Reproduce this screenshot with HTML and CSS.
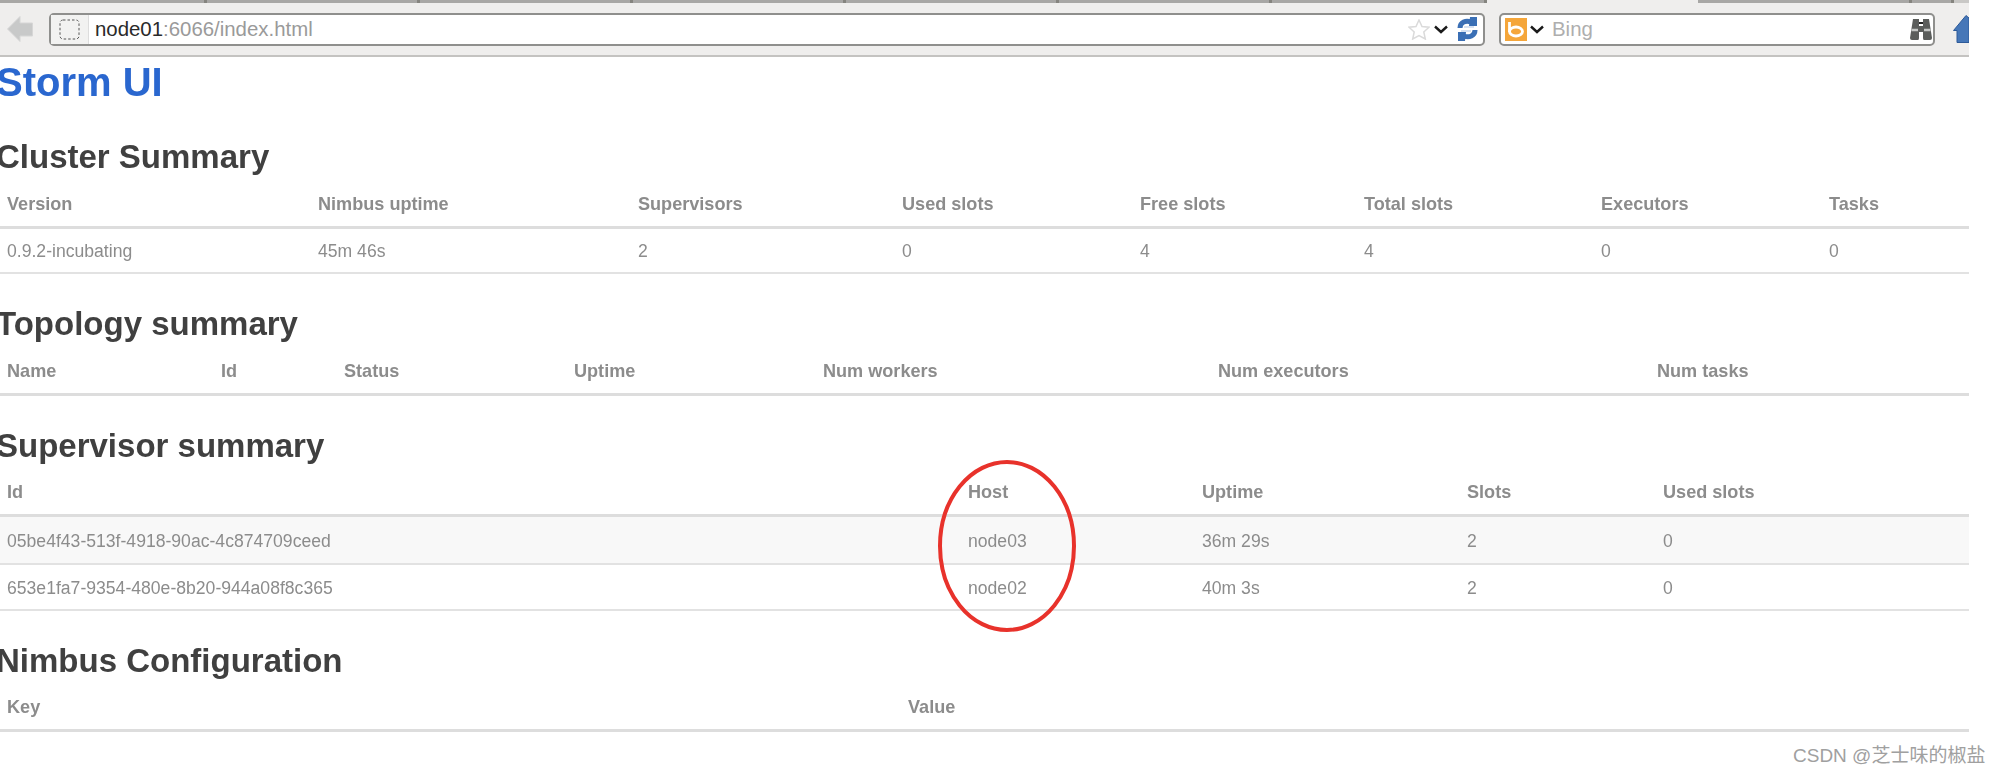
FILE: index.html
```html
<!DOCTYPE html>
<html lang="en">
<head>
<meta charset="utf-8">
<title>Storm UI</title>
<link rel="stylesheet" href="styles.css">
</head>
<body>
<div class="page">
  <div class="toolbar">
    <div class="tabs">
      <span class="tab t1"></span><span class="tab t2"></span><span class="tab t2"></span><span class="tab t2"></span><span class="tab t2"></span><span class="tab t2"></span><span class="tab t3"></span><span class="tabgap"></span><span class="tab t4"></span><span class="tab t5"></span><span class="tabrest"></span>
    </div>
    <div class="navrow">
      <svg class="back" width="26" height="26" viewBox="0 0 26 26"><path d="M0.500 13 L13 0.500 V7 H25.500 V20 H13 V25.500 Z" fill="#c8c9c9" stroke="#d6d6d6"/></svg>
      <div class="urlbar">
        <span class="identity"><svg width="21" height="21" viewBox="0 0 21 21"><rect x="1" y="1" width="19" height="19" rx="3" fill="none" stroke="#555" stroke-dasharray="2.500 2"/></svg></span>
        <span class="host">node01</span><span class="urlrest">:6066/index.html</span>
        <span class="grow"></span>
        <svg class="star" width="22" height="21" viewBox="0 0 22 21"><path d="M11 1 L14 7.500 L21 8.200 L15.800 13 L17.300 20 L11 16.500 L4.700 20 L6.200 13 L1 8.200 L8 7.500 Z" fill="#fff" stroke="#dadada" stroke-width="1.500"/></svg>
        <svg class="chev" width="14" height="9" viewBox="0 0 14 9"><path d="M1 1.500 L7 7 L13 1.500" fill="none" stroke="#1a1a1a" stroke-width="2.400"/></svg>
        <svg class="reload" width="21" height="24" viewBox="0 0 21 24"><path d="M3 11 C3 5 9 3 14 5 M18 13 C18 19 12 21 7 19" fill="none" stroke="#3a6fb5" stroke-width="5"/><path d="M13 0 L20 0 L20 9 L12 9 Z M8 24 L1 24 L1 15 L9 15 Z" fill="#3a6fb5"/><path d="M7 10 H17 M4 14 H14" stroke="#c9d9ee" stroke-width="1.500"/></svg>
      </div>
      <div class="searchbar">
        <svg class="bing" width="22" height="23" viewBox="0 0 22 23"><rect width="22" height="23" fill="#f5a63a"/><ellipse cx="11" cy="13.500" rx="6.500" ry="4.500" fill="none" stroke="#fff" stroke-width="2.800"/><path d="M4.500 4 V14" stroke="#fff" stroke-width="2.800"/></svg>
        <svg class="chev" width="14" height="9" viewBox="0 0 14 9"><path d="M1 1.500 L7 7 L13 1.500" fill="none" stroke="#1a1a1a" stroke-width="2.400"/></svg>
        <span class="engine">Bing</span>
        <span class="grow"></span>
        <svg class="binoc" width="24" height="22" viewBox="0 0 24 22"><path d="M4 1 H10 V8 H14 V1 H20 L23 20 Q23 22 21 22 H15 Q14 22 14 20 V14 H10 V20 Q10 22 9 22 H3 Q1 22 1 20 Z" fill="#5b5d5b"/><path d="M2.500 12 H9 M15 12 H21.500" stroke="#c4c6c4" stroke-width="2.500"/><path d="M10 5 H14" stroke="#222" stroke-width="2"/></svg>
      </div>
      <svg class="home" width="16" height="28" viewBox="0 0 16 28"><path d="M0.500 15.500 L13 0.500 L16 3 V27.500 H4 V15.500 Z" fill="#4677b8" stroke="#2d5a99"/></svg>
    </div>
  </div>

  <h1 class="title">Storm UI</h1>

  <h2 class="heading">Cluster Summary</h2>
  <table class="grid">
    <colgroup><col class="c1a"><col class="c1b"><col class="c1c"><col class="c1d"><col class="c1e"><col class="c1f"><col class="c1g"><col></colgroup>
    <thead><tr><th>Version</th><th>Nimbus uptime</th><th>Supervisors</th><th>Used slots</th><th>Free slots</th><th>Total slots</th><th>Executors</th><th>Tasks</th></tr></thead>
    <tbody><tr><td>0.9.2-incubating</td><td>45m 46s</td><td>2</td><td>0</td><td>4</td><td>4</td><td>0</td><td>0</td></tr></tbody>
  </table>

  <h2 class="heading">Topology summary</h2>
  <table class="grid">
    <colgroup><col class="c2a"><col class="c2b"><col class="c2c"><col class="c2d"><col class="c2e"><col class="c2f"><col></colgroup>
    <thead><tr><th>Name</th><th>Id</th><th>Status</th><th>Uptime</th><th>Num workers</th><th>Num executors</th><th>Num tasks</th></tr></thead>
  </table>

  <section class="supervisors">
    <h2 class="heading">Supervisor summary</h2>
    <table class="grid">
      <colgroup><col class="c3a"><col class="c3b"><col class="c3c"><col class="c3d"><col></colgroup>
      <thead><tr><th>Id</th><th>Host</th><th>Uptime</th><th>Slots</th><th>Used slots</th></tr></thead>
      <tbody>
        <tr class="odd"><td>05be4f43-513f-4918-90ac-4c874709ceed</td><td>node03</td><td>36m 29s</td><td>2</td><td>0</td></tr>
        <tr><td>653e1fa7-9354-480e-8b20-944a08f8c365</td><td>node02</td><td>40m 3s</td><td>2</td><td>0</td></tr>
      </tbody>
    </table>
    <svg class="circle" width="140" height="174" viewBox="0 0 140 174"><ellipse cx="70" cy="87" rx="67" ry="84" fill="none" stroke="#e8322b" stroke-width="4"/></svg>
  </section>

  <h2 class="heading">Nimbus Configuration</h2>
  <table class="grid">
    <colgroup><col class="c4a"><col></colgroup>
    <thead><tr><th>Key</th><th>Value</th></tr></thead>
  </table>
</div>
<div class="watermark">CSDN @芝士味的椒盐</div>
</body>
</html>
```
FILE: styles.css
```css
* { box-sizing: border-box; }
html, body { margin: 0; padding: 0; background: #fff; overflow: hidden; }
body { height: 776px; position: relative; font-family: "Liberation Sans", Arial, sans-serif; }
.page { width: 1969px; filter: blur(0.5px); }

.toolbar { height: 57px; display: flex; flex-direction: column; background: #efeeed; border-bottom: 2px solid #c4c3c1; }
.tabs { height: 4px; display: flex; flex: none; }
.tab { height: 3px; background: #a8a7a5; border-right: 3px solid #85847f; }
.t1 { width: 207px; } .t2 { width: 213px; } .t3 { width: 215px; } .t4 { width: 214px; } .t5 { width: 42px; }
.tabgap { width: 211px; }
.tabrest { flex: 1; height: 3px; background: #c9c8c6; }

.navrow { flex: 1; display: flex; align-items: center; padding: 0 0 1px 7px; }
.back { margin-right: 16px; flex: none; }
.urlbar, .searchbar { height: 33px; background: #fff; border: 2px solid #8f8f8d; border-radius: 5px; display: flex; align-items: center; font-size: 20.4px; flex: none; }
.urlbar { width: 1436px; padding-right: 5px; }
.identity { width: 38px; height: 100%; display: flex; align-items: center; justify-content: center; background: #f2f2f1; border-right: 1px solid #ddd; margin-right: 6px; }
.host { color: #2a2a2a; }
.urlrest { color: #9a9a9a; }
.grow { flex: 1; }
.star { margin-right: 4px; }
.urlbar .chev { margin-right: 9px; }
.searchbar { width: 436px; margin-left: 14px; padding: 0 0 0 4px; }
.searchbar .chev { margin-left: 3px; margin-right: 8px; }
.engine { color: #aeaeae; }
.home { margin-left: 18px; flex: none; }

.title { margin: 0 0 0 -4px; font-size: 40px; line-height: 50px; font-weight: 700; color: #2a67cf; }
.heading { margin: 30px 0 0 -4px; font-size: 33px; line-height: 40px; font-weight: 700; color: #404040; }

.grid { width: 100%; table-layout: fixed; border-collapse: collapse; color: #8c8c8c; }
.grid th { height: 50px; padding: 6px 0 0 7px; text-align: left; font-size: 18.1px; font-weight: 700; border-bottom: 3px solid #dddddd; }
.grid td { height: 46px; padding: 3px 0 0 7px; font-size: 17.6px; border-bottom: 2px solid #e2e2e2; white-space: nowrap; }
.odd td { height: 48px; background: #f8f8f8; }

.c1a { width: 311px; } .c1b { width: 320px; } .c1c { width: 264px; } .c1d { width: 238px; }
.c1e { width: 224px; } .c1f { width: 237px; } .c1g { width: 228px; }
.c2a { width: 214px; } .c2b { width: 123px; } .c2c { width: 230px; } .c2d { width: 249px; }
.c2e { width: 395px; } .c2f { width: 439px; }
.c3a { width: 961px; } .c3b { width: 234px; } .c3c { width: 265px; } .c3d { width: 196px; }
.c4a { width: 901px; }

.supervisors { position: relative; }
.circle { position: absolute; left: 937px; top: 33px; }
.watermark { position: absolute; left: 1793px; top: 745px; font-size: 19px; line-height: 22px; color: #a0a0a0; font-family: "Liberation Sans", "Noto Sans CJK SC", sans-serif; white-space: nowrap; }
```
